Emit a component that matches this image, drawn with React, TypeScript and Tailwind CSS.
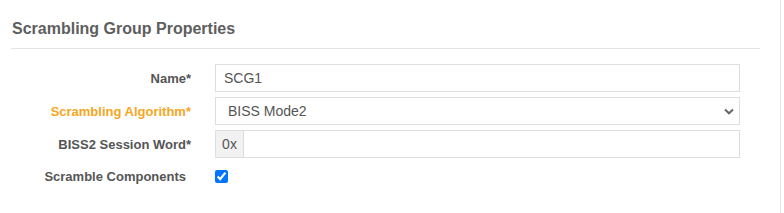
import React from "react";

export default function App() {
  const labelCls =
    "w-[191px] shrink-0 text-right text-[13px] font-bold text-[#555555] leading-none";
  return (
    <div
      className="w-[781px] h-[213px] bg-white border-r border-[#e6e6e6]"
      style={{ fontFamily: '"Liberation Sans", Arial, sans-serif' }}
    >
      <div className="ml-[11px] w-[749px] h-[49px] border-b border-[#e3e3e3] pt-[20px] pl-[1px]">
        <h2 className="text-[16px] font-bold text-[#5e5e5e] leading-[18px]">
          Scrambling Group Properties
        </h2>
      </div>
      <div className="pt-[15px] flex flex-col gap-[5px]">
        <div className="flex items-center h-[28px]">
          <div className={labelCls}>Name*</div>
          <div className="ml-[24px] w-[525px] h-[28px] border border-[#dedede] flex items-center pl-[8px] text-[14px] text-[#555555]">
            SCG1
          </div>
        </div>
        <div className="flex items-center h-[28px]">
          <div className={labelCls + " !text-[#f5a623]"}>Scrambling Algorithm*</div>
          <div className="ml-[24px] w-[525px] h-[28px] border border-[#dedede] flex items-center justify-between pl-[12px] pr-[5px] text-[14px] text-[#555555]">
            <span>BISS Mode2</span>
            <svg width="10" height="7" viewBox="0 0 10 7">
              <path d="M1 1.5 L5 5.3 L9 1.5" fill="none" stroke="#666" strokeWidth="2" />
            </svg>
          </div>
        </div>
        <div className="flex items-center h-[28px]">
          <div className={labelCls}>BISS2 Session Word*</div>
          <div className="ml-[24px] w-[525px] h-[28px] border border-[#dedede] flex text-[14px] text-[#555555]">
            <div className="w-[28px] h-full bg-[#f2f2f2] border-r border-[#dedede] flex items-center justify-center">
              0x
            </div>
            <div className="flex-1" />
          </div>
        </div>
        <div className="flex items-center h-[13px] mt-[7px]">
          <div className={labelCls + " pr-[5px]"}>Scramble Components</div>
          <input
            type="checkbox"
            checked
            readOnly
            className="ml-[24px] w-[13px] h-[13px] m-0"
          />
        </div>
      </div>
    </div>
  );
}
